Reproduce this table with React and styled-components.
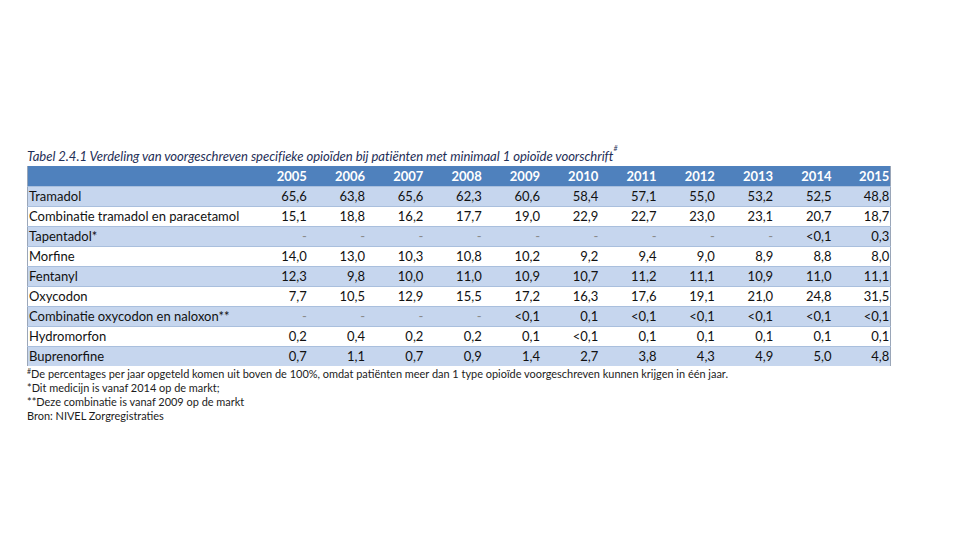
import React from "react";
import styled, { createGlobalStyle } from "styled-components";

const Global = createGlobalStyle`
  html, body { margin: 0; padding: 0; background: #fff; }
  body { font-family: "Lato", "Liberation Sans", sans-serif; }
`;

const Page = styled.div`
  width: 960px;
  height: 540px;
  box-sizing: border-box;
  padding: 146px 0 0 27px;
  overflow: hidden;
`;

const Block = styled.div`
  width: 864px;
`;

const Title = styled.div`
  font-style: italic;
  font-size: 13.1px;
  line-height: 20px;
  color: #1f2f57;
  white-space: nowrap;
  letter-spacing: -0.05px;
`;

const Sup = styled.sup`
  font-size: 7px;
  vertical-align: top;
  line-height: 1;
  position: relative;
  top: ${(p) => (p.$low ? "1px" : "-1px")};
`;

const Table = styled.table`
  width: 864px;
  border-collapse: collapse;
  table-layout: fixed;
  font-size: 13px;
  color: #111;
  border-left: 1px solid #9aa6b8;
  border-right: 1px solid #9aa6b8;
`;

const HeadRow = styled.tr`
  background: #4f81bd;
  height: 20px;
`;

const HeadCell = styled.th`
  color: #fff;
  font-weight: 700;
  text-align: right;
  padding: 0 1px 0 0;
  font-size: 13px;
`;

const Row = styled.tr`
  height: 20px;
  background: ${(p) => (p.$shaded ? "#c6d6ee" : "#ffffff")};
  border-top: 1px solid #a9bfdd;
`;

const NameCell = styled.td`
  text-align: left;
  padding: 0 0 0 1px;
  white-space: nowrap;
  color: #111;
`;

const NumCell = styled.td`
  text-align: right;
  padding: 0 1px 0 0;
  white-space: nowrap;
  color: ${(p) => (p.$dash ? "#8a8a8a" : "#111")};
`;

const Notes = styled.div`
  margin-top: 1px;
  font-size: 10.95px;
  line-height: 14px;
  color: #1c1c1c;
`;

const Note = styled.div`
  white-space: nowrap;
`;

const years = [2005, 2006, 2007, 2008, 2009, 2010, 2011, 2012, 2013, 2014, 2015];

const rows = [
  ["Tramadol", ["65,6", "63,8", "65,6", "62,3", "60,6", "58,4", "57,1", "55,0", "53,2", "52,5", "48,8"]],
  ["Combinatie tramadol en paracetamol", ["15,1", "18,8", "16,2", "17,7", "19,0", "22,9", "22,7", "23,0", "23,1", "20,7", "18,7"]],
  ["Tapentadol*", ["-", "-", "-", "-", "-", "-", "-", "-", "-", "<0,1", "0,3"]],
  ["Morfine", ["14,0", "13,0", "10,3", "10,8", "10,2", "9,2", "9,4", "9,0", "8,9", "8,8", "8,0"]],
  ["Fentanyl", ["12,3", "9,8", "10,0", "11,0", "10,9", "10,7", "11,2", "11,1", "10,9", "11,0", "11,1"]],
  ["Oxycodon", ["7,7", "10,5", "12,9", "15,5", "17,2", "16,3", "17,6", "19,1", "21,0", "24,8", "31,5"]],
  ["Combinatie oxycodon en naloxon**", ["-", "-", "-", "-", "<0,1", "0,1", "<0,1", "<0,1", "<0,1", "<0,1", "<0,1"]],
  ["Hydromorfon", ["0,2", "0,4", "0,2", "0,2", "0,1", "<0,1", "0,1", "0,1", "0,1", "0,1", "0,1"]],
  ["Buprenorfine", ["0,7", "1,1", "0,7", "0,9", "1,4", "2,7", "3,8", "4,3", "4,9", "5,0", "4,8"]],
];

export default function App() {
  return (
    <Page>
      <Global />
      <Block>
        <Title>
          Tabel 2.4.1 Verdeling van voorgeschreven specifieke opioïden bij patiënten met minimaal 1 opioïde voorschrift
          <Sup>#</Sup>
        </Title>
        <Table>
          <colgroup>
            <col style={{ width: "222px" }} />
            {years.map((y) => (
              <col key={y} style={{ width: "58.3px" }} />
            ))}
          </colgroup>
          <thead>
            <HeadRow>
              <HeadCell />
              {years.map((y) => (
                <HeadCell key={y}>{y}</HeadCell>
              ))}
            </HeadRow>
          </thead>
          <tbody>
            {rows.map(([name, vals], i) => (
              <Row key={name} $shaded={i % 2 === 0}>
                <NameCell>{name}</NameCell>
                {vals.map((v, j) => (
                  <NumCell key={j} $dash={v === "-"}>
                    {v}
                  </NumCell>
                ))}
              </Row>
            ))}
          </tbody>
        </Table>
        <Notes>
          <Note>
            <Sup $low>#</Sup>De percentages per jaar opgeteld komen uit boven de 100%, omdat patiënten meer dan 1 type opioïde voorgeschreven kunnen krijgen in één jaar.
          </Note>
          <Note>*Dit medicijn is vanaf 2014 op de markt;</Note>
          <Note>**Deze combinatie is vanaf 2009 op de markt</Note>
          <Note>Bron: NIVEL Zorgregistraties</Note>
        </Notes>
      </Block>
    </Page>
  );
}
